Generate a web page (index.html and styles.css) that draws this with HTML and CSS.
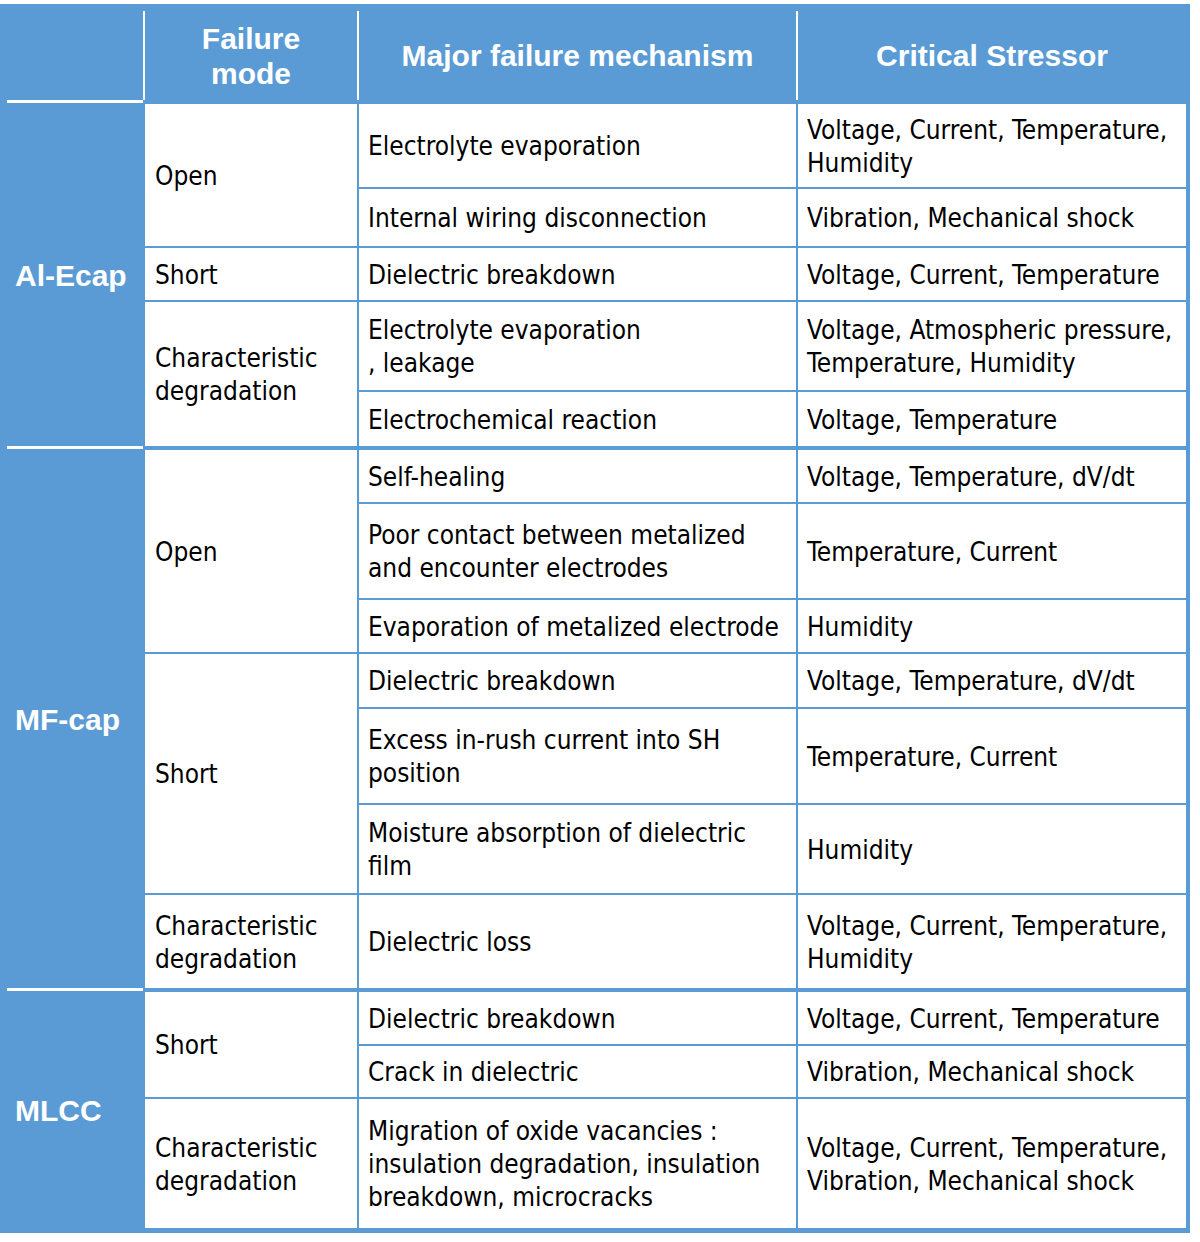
FILE: index.html
```html
<!DOCTYPE html>
<html lang="en">
<head>
<meta charset="utf-8">
<title>Capacitor failure modes</title>
<link rel="stylesheet" href="styles.css">
</head>
<body>
<div class="frame">
<table class="fm">
  <colgroup>
    <col class="c1"><col class="c2"><col class="c3"><col class="c4">
  </colgroup>
  <thead>
    <tr class="hdr">
      <th class="corner"></th>
      <th>Failure<br>mode</th>
      <th>Major failure mechanism</th>
      <th>Critical Stressor</th>
    </tr>
  </thead>
  <tbody>
    <tr class="r87 gstart">
      <td class="grp" rowspan="5">Al-Ecap</td>
      <td class="mode" rowspan="2">Open</td>
      <td>Electrolyte evaporation</td>
      <td>Voltage, Current, Temperature,<br>Humidity</td>
    </tr>
    <tr class="r59">
      <td>Internal wiring disconnection</td>
      <td>Vibration, Mechanical shock</td>
    </tr>
    <tr class="r54">
      <td class="mode">Short</td>
      <td>Dielectric breakdown</td>
      <td>Voltage, Current, Temperature</td>
    </tr>
    <tr class="r90">
      <td class="mode" rowspan="2">Characteristic<br>degradation</td>
      <td>Electrolyte evaporation<br>, leakage</td>
      <td>Voltage, Atmospheric pressure,<br>Temperature, Humidity</td>
    </tr>
    <tr class="r56">
      <td>Electrochemical reaction</td>
      <td>Voltage, Temperature</td>
    </tr>

    <tr class="r56 gstart">
      <td class="grp" rowspan="7">MF-cap</td>
      <td class="mode" rowspan="3">Open</td>
      <td>Self-healing</td>
      <td>Voltage, Temperature, dV/dt</td>
    </tr>
    <tr class="r96">
      <td>Poor contact between metalized<br>and encounter electrodes</td>
      <td>Temperature, Current</td>
    </tr>
    <tr class="r54">
      <td>Evaporation of metalized electrode</td>
      <td>Humidity</td>
    </tr>
    <tr class="r55">
      <td class="mode" rowspan="3">Short</td>
      <td>Dielectric breakdown</td>
      <td>Voltage, Temperature, dV/dt</td>
    </tr>
    <tr class="r96">
      <td>Excess in-rush current into SH<br>position</td>
      <td>Temperature, Current</td>
    </tr>
    <tr class="r90">
      <td>Moisture absorption of dielectric<br>film</td>
      <td>Humidity</td>
    </tr>
    <tr class="r95">
      <td class="mode">Characteristic<br>degradation</td>
      <td>Dielectric loss</td>
      <td>Voltage, Current, Temperature,<br>Humidity</td>
    </tr>

    <tr class="r56 gstart">
      <td class="grp" rowspan="3">MLCC</td>
      <td class="mode" rowspan="2">Short</td>
      <td>Dielectric breakdown</td>
      <td>Voltage, Current, Temperature</td>
    </tr>
    <tr class="r53">
      <td>Crack in dielectric</td>
      <td>Vibration, Mechanical shock</td>
    </tr>
    <tr class="r131">
      <td class="mode">Characteristic<br>degradation</td>
      <td>Migration of oxide vacancies :<br>insulation degradation, insulation<br>breakdown, microcracks</td>
      <td>Voltage, Current, Temperature,<br>Vibration, Mechanical shock</td>
    </tr>
  </tbody>
</table>
</div>
</body>
</html>
```

FILE: styles.css
```css
html, body {
  margin: 0;
  padding: 0;
  background: #ffffff;
}

.frame {
  margin-top: 4px;
  width: 1190px;
  box-sizing: border-box;
  padding: 7px 4px 5px 7px;
  background: #5b9bd5;
}

.fm {
  border-collapse: separate;
  border-spacing: 0;
  table-layout: fixed;
  width: 1179px;
  font-family: "DejaVu Sans Condensed", "DejaVu Sans", sans-serif;
  font-stretch: condensed;
  font-size: 26px;
  line-height: 33px;
  color: #000;
}

.c1 { width: 136px; }
.c2 { width: 214px; }
.c3 { width: 439px; }
.c4 { width: 390px; }

.fm th, .fm td {
  box-sizing: border-box;
  vertical-align: middle;
}

.hdr { height: 89px; }

.fm th {
  background: #5b9bd5;
  color: #fff;
  font-family: "Liberation Sans", Arial, sans-serif;
  font-weight: bold;
  font-size: 30px;
  line-height: 35px;
  text-align: center;
  padding: 0 2px;
  border-left: 2px solid #fff;
}

.fm th.corner {
  border-left: 0;
}

.fm td {
  background: #fff;
  text-align: left;
  padding: 2px 2px 0 9px;
  border-top: 2px solid #5b9bd5;
  border-left: 2px solid #5b9bd5;
  white-space: nowrap;
}

.fm td.mode {
  padding-left: 10px;
}

.fm td.grp {
  background: #5b9bd5;
  color: #fff;
  font-family: "Liberation Sans", Arial, sans-serif;
  font-weight: bold;
  font-size: 30px;
  padding: 2px 0 0 8px;
  border-left: 0;
  border-top: 3px solid #fff;
}

.gstart td {
  border-top-width: 4px;
}

.gstart td.grp {
  border-top-width: 3px;
}

.r53 { height: 53px; }
.r54 { height: 54px; }
.r55 { height: 55px; }
.r56 { height: 56px; }
.r59 { height: 59px; }
.r87 { height: 87px; }
.r90 { height: 90px; }
.r95 { height: 95px; }
.r96 { height: 96px; }
.r131 { height: 131px; }
```
